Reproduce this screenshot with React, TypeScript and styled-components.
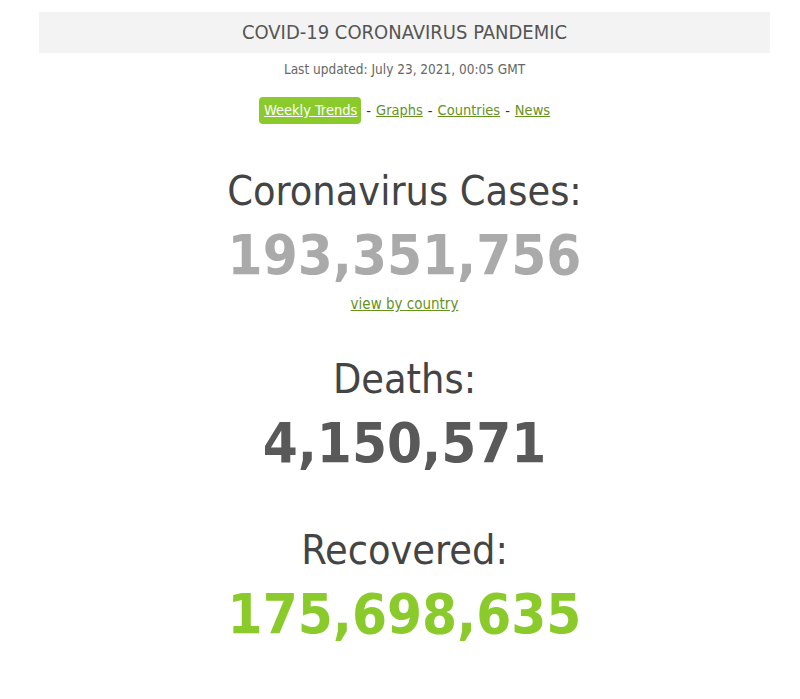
import React from "react";
import styled, { createGlobalStyle } from "styled-components";

const GlobalStyle = createGlobalStyle`
  body {
    margin: 0;
    background: #fff;
    font-family: "DejaVu Sans Condensed", "DejaVu Sans", Verdana, sans-serif;
    font-stretch: condensed;
  }
`;

const Page = styled.div`
  width: 731px;
  padding: 12px 0 0 39px;
  text-align: center;
`;

const TitleBar = styled.div`
  height: 41px;
  line-height: 41px;
  background: #f3f3f3;
  color: #555;
  font-size: 20px;
`;

const Updated = styled.div`
  margin-top: 8px;
  font-size: 13.5px;
  line-height: 16px;
  color: #666;
`;

const NavRow = styled.div`
  margin-top: 20px;
  display: flex;
  justify-content: center;
  align-items: center;
  gap: 5px;
  height: 27px;
  font-size: 14.5px;
  color: #333;
`;

const NavLink = styled.a<{ $active?: boolean }>`
  color: ${(p) => (p.$active ? "#fff" : "#66921e")};
  background: ${(p) => (p.$active ? "#8aca2b" : "transparent")};
  padding: ${(p) => (p.$active ? "4px 4px 4px 5px" : "0")};
  border-radius: 4px;
  text-decoration: underline;
  line-height: 19px;
  cursor: pointer;
`;

const Counter = styled.div<{ $gap: number }>`
  margin-top: ${(p) => p.$gap}px;
`;

const Label = styled.h1`
  margin: 0;
  font-size: 41px;
  font-weight: normal;
  line-height: 48px;
  color: #444;
`;

const Number = styled.div<{ $color: string }>`
  margin: 8px 0 8px;
  font-size: 56px;
  font-weight: bold;
  line-height: 64px;
  color: ${(p) => p.$color};
`;

const CountryLink = styled.a`
  display: block;
  font-size: 15px;
  line-height: 18px;
  color: #66921e;
  text-decoration: underline;
`;

const App = () => {
  return (
    <>
      <GlobalStyle />
      <Page>
        <TitleBar>COVID-19 CORONAVIRUS PANDEMIC</TitleBar>
        <Updated>Last updated: July 23, 2021, 00:05 GMT</Updated>
        <NavRow>
          <NavLink $active>Weekly Trends</NavLink>
          <span>-</span>
          <NavLink>Graphs</NavLink>
          <span>-</span>
          <NavLink>Countries</NavLink>
          <span>-</span>
          <NavLink>News</NavLink>
        </NavRow>
        <Counter $gap={43}>
          <Label>Coronavirus Cases:</Label>
          <Number $color="#aaa">193,351,756</Number>
          <CountryLink>view by country</CountryLink>
        </Counter>
        <Counter $gap={42}>
          <Label>Deaths:</Label>
          <Number $color="#595959">4,150,571</Number>
        </Counter>
        <Counter $gap={51}>
          <Label>Recovered:</Label>
          <Number $color="#8aca2b">175,698,635</Number>
        </Counter>
      </Page>
    </>
  );
};

export default App;
